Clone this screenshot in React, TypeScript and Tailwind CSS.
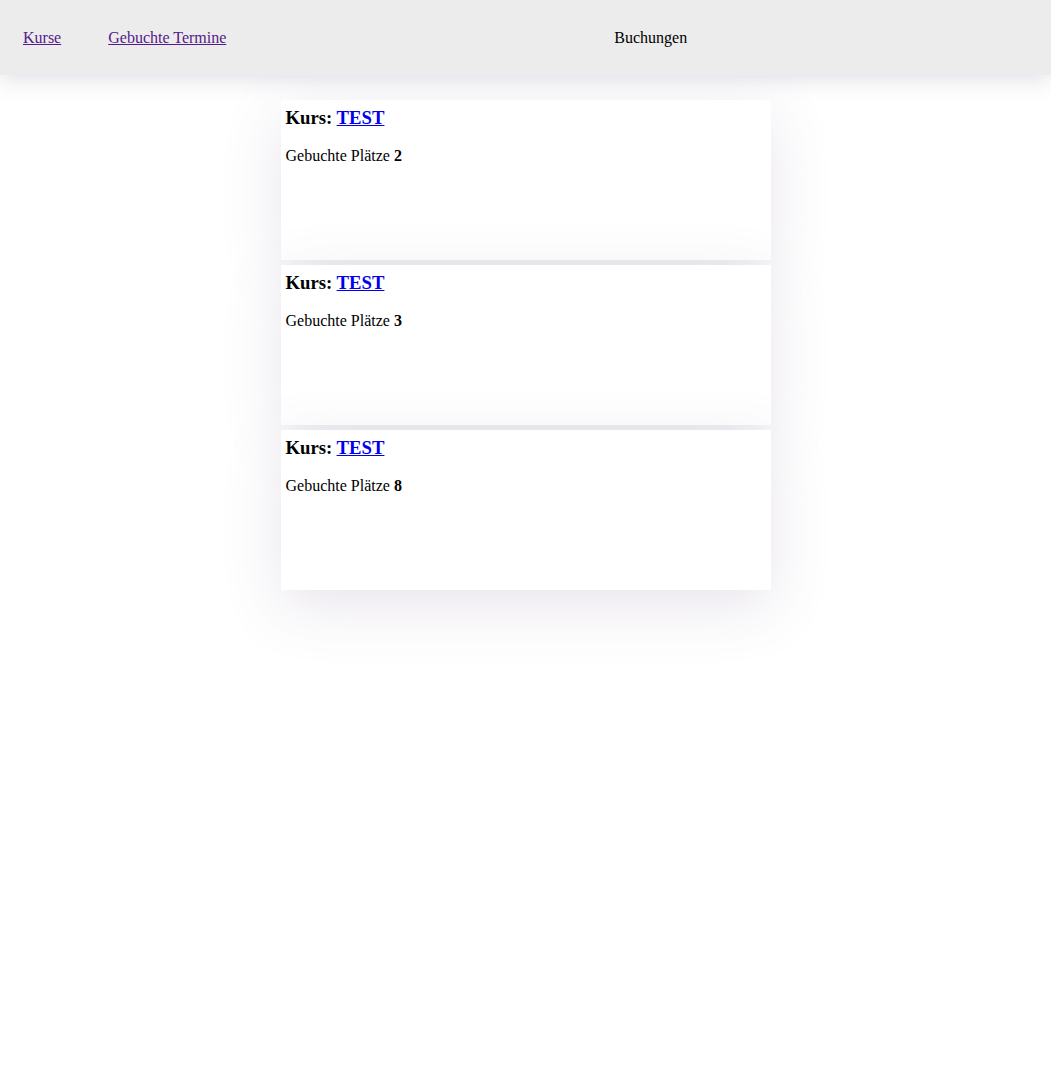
import React from "react";

const bookings = [2, 3, 8];

export default function App() {
  return (
    <div className="min-h-[1071px] bg-white text-black" style={{ fontFamily: '"Liberation Serif", "Times New Roman", serif' }}>
      <header className="relative z-10 flex h-[75px] items-center bg-[#ececec] text-base shadow-[0_6px_20px_rgba(120,110,140,0.2)]">
        <a href="#" className="ml-[23px] text-[#551a8b] underline">Kurse</a>
        <a href="#" className="ml-[47px] text-[#551a8b] underline">Gebuchte Termine</a>
        <span className="ml-[388px]">Buchungen</span>
      </header>
      <main className="mx-auto flex w-[490px] flex-col gap-[5px] pt-[25px]">
        {bookings.map((n, i) => (
          <div
            key={i}
            className="h-[160px] bg-white px-[5px] pt-[7px] shadow-[0_16px_60px_rgba(110,90,130,0.16)]"
          >
            <h3 className="mb-[18.72px] text-[18.72px] font-bold leading-[21.5px]">
              Kurs: <a href="#" className="text-[#0000ee] underline">TEST</a>
            </h3>
            <p className="text-base leading-[18px]">
              Gebuchte Plätze <b>{n}</b>
            </p>
          </div>
        ))}
      </main>
    </div>
  );
}
